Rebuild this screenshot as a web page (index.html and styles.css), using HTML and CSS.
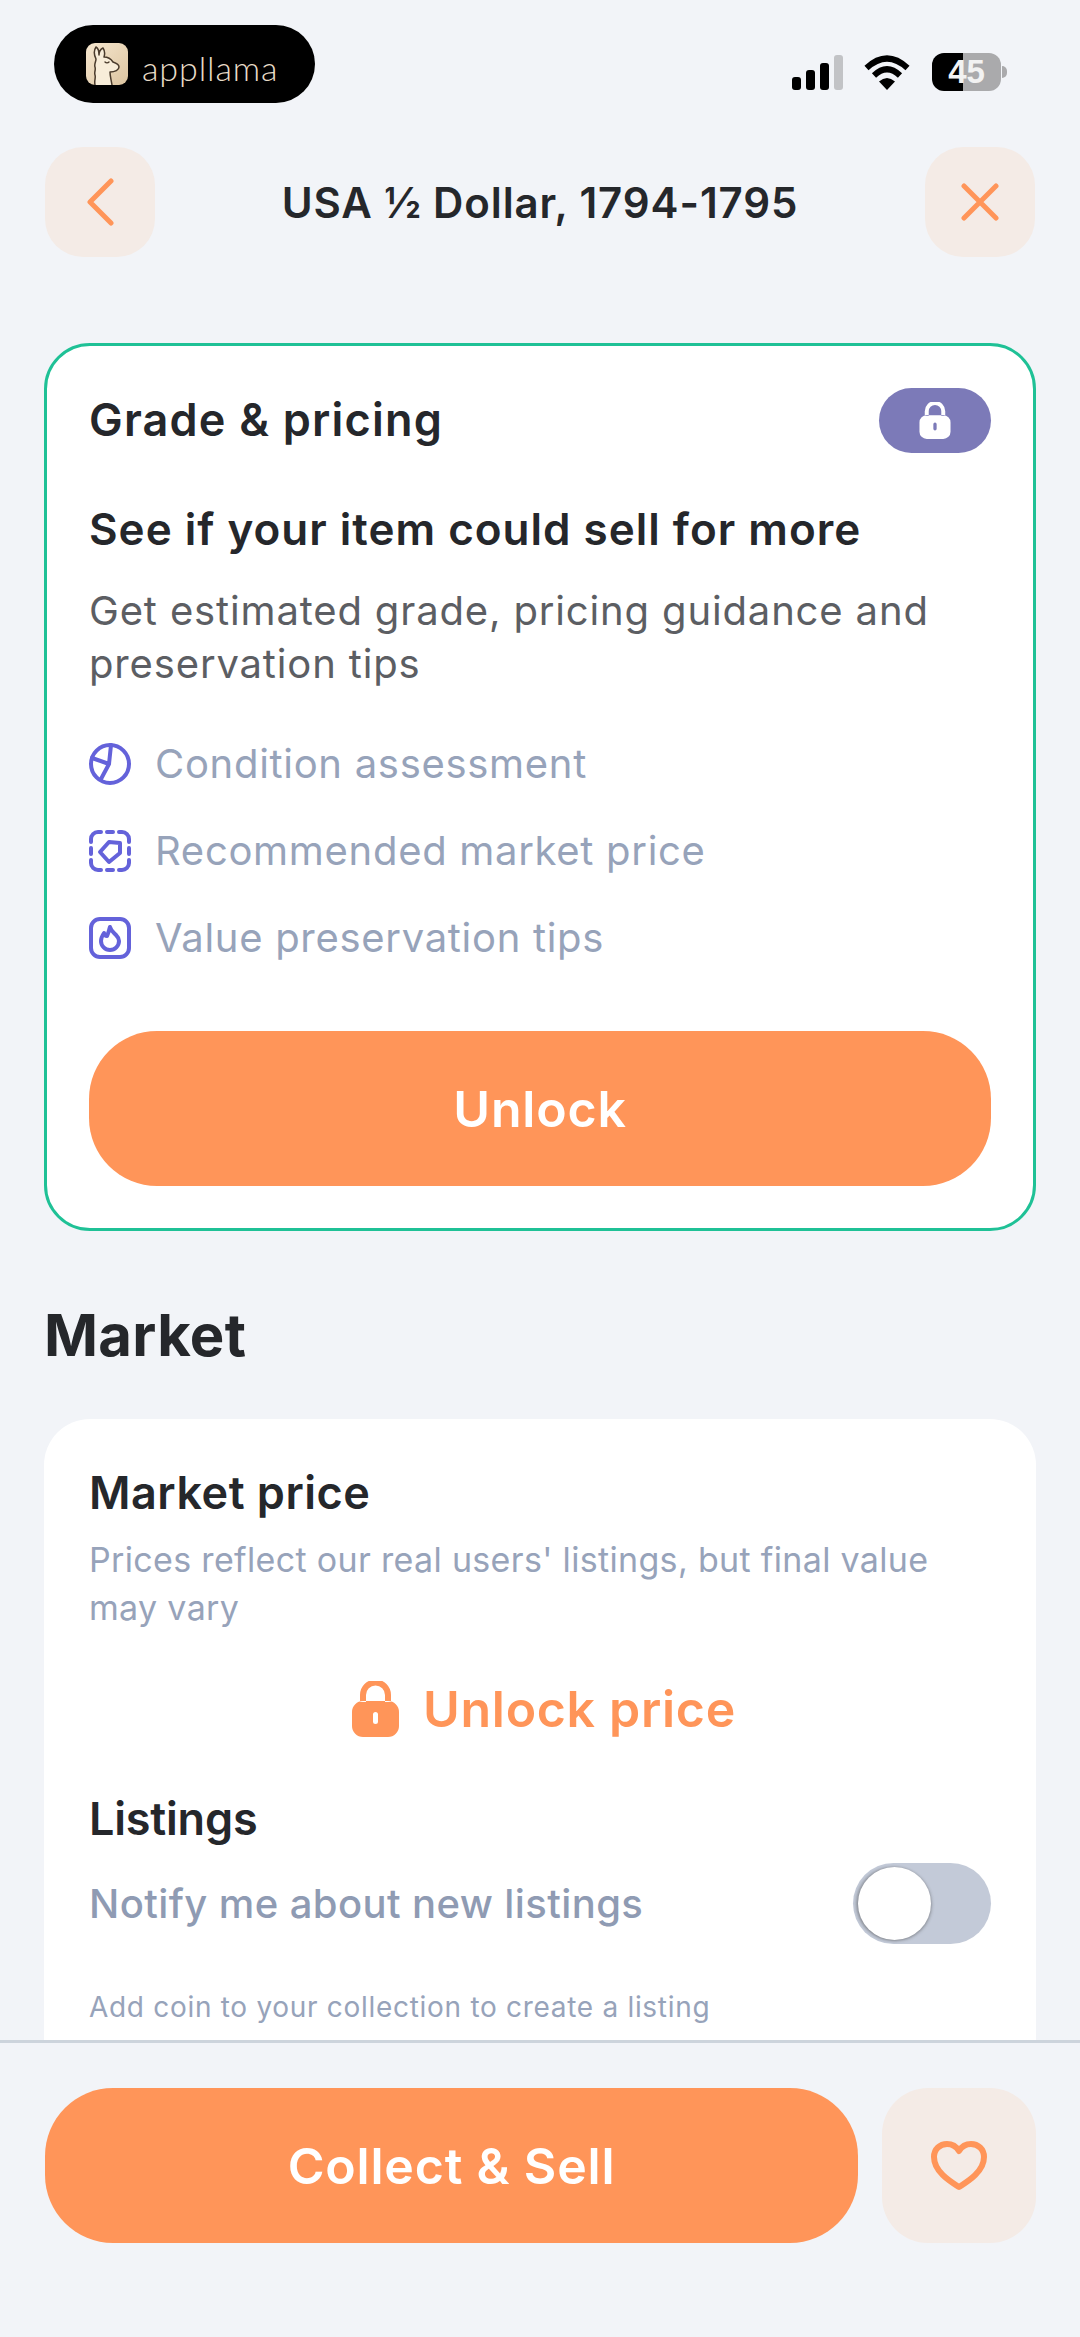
FILE: index.html
```html
<!DOCTYPE html>
<html lang="en">
<head>
<meta charset="UTF-8" />
<meta name="viewport" content="width=device-width, initial-scale=1" />
<title>USA ½ Dollar, 1794-1795</title>
<link rel="stylesheet" href="styles.css">
</head>
<body>
<div class="screen">

  <div class="status">
    <div class="app-pill">
      <svg class="app-logo" viewBox="0 0 42 42">
        <defs>
          <linearGradient id="logo-bg" x1="0" y1="0" x2="1" y2="1">
            <stop offset="0" stop-color="#f6e7cf"/>
            <stop offset="1" stop-color="#dcc4a0"/>
          </linearGradient>
        </defs>
        <rect width="42" height="42" rx="9" fill="url(#logo-bg)"/>
        <path d="M9 42c-1-5 1-7 0-10s1-5 0-8 1-5 1-8c-2-4-2-9 0-12 2 1 3 5 3 8 0-3 2-6 4-7 2 3 2 6 1 9 4 0 7 2 9 5 3 1 6 2 6 5s-4 5-9 5c0 4 1 7 2 13" fill="#f8edd9" stroke="#4a3b2c" stroke-width="1.5" stroke-linecap="round" stroke-linejoin="round"/>
        <path d="M19 19c1 1 3 1 4 0" fill="none" stroke="#4a3b2c" stroke-width="1.4" stroke-linecap="round"/>
      </svg>
      <span class="app-name">appllama</span>
    </div>
    <div class="indicators">
      <div class="signal">
        <span class="bar bar-1"></span>
        <span class="bar bar-2"></span>
        <span class="bar bar-3"></span>
        <span class="bar bar-4"></span>
      </div>
      <svg class="wifi" viewBox="0 0 46 35">
        <path d="M2.500 13Q23-6 43.500 13" fill="none" stroke="#000" stroke-width="6"/>
        <path d="M10 20.500Q23 8 36 20.500" fill="none" stroke="#000" stroke-width="6"/>
        <path d="M15 26.500Q23 19.500 31 26.500L23 35z" fill="#000"/>
      </svg>
      <div class="battery">45</div>
      <span class="battery-nub"></span>
    </div>
  </div>

  <header class="nav">
    <button class="icon-btn">
      <svg class="nav-icon" viewBox="0 0 30 48"><path d="M26 3 5 24l21 21"/></svg>
    </button>
    <h1 class="nav-title">USA ½ Dollar, 1794-1795</h1>
    <button class="icon-btn">
      <svg class="nav-icon close-icon" viewBox="0 0 38 38"><path d="M3 3l32 32M35 3 3 35"/></svg>
    </button>
  </header>

  <main class="content">
    <section class="card card-promo">
      <div class="card-head">
        <h2 class="card-title promo-head">Grade &amp; pricing</h2>
        <span class="lock-pill">
          <svg class="lock-small" viewBox="0 0 47 56"><path fill-rule="evenodd" d="M8 21v-7a15.500 15.500 0 0 1 31 0v7h-6v-7a9.500 9.500 0 0 0-19 0v7zM11 20h25a11 11 0 0 1 11 11v14a11 11 0 0 1-11 11H11A11 11 0 0 1 0 45V31a11 11 0 0 1 11-11zM23.500 31a2.500 2.500 0 0 0-2.500 2.500v7a2.500 2.500 0 0 0 5 0v-7a2.500 2.500 0 0 0-2.500-2.500z"/></svg>
        </span>
      </div>
      <h3 class="promo-title">See if your item could sell for more</h3>
      <p class="promo-text">Get estimated grade, pricing guidance and preservation tips</p>
      <ul class="features">
        <li class="feature">
          <svg class="feature-icon" viewBox="0 0 42 42">
            <circle cx="21" cy="21" r="19"/>
            <path d="M22 2l-2 19-8 15M20 21 3 15"/>
          </svg>
          Condition assessment
        </li>
        <li class="feature">
          <svg class="feature-icon" viewBox="0 0 42 42">
            <path d="M2 12V9a7 7 0 0 1 7-7h3M18 2h6M30 2h3a7 7 0 0 1 7 7v3M40 18v6M40 30v3a7 7 0 0 1-7 7h-3M24 40h-6M12 40H9a7 7 0 0 1-7-7v-3M2 24v-6"/>
            <path d="M11 22l9-10 11 1v10l-11 9z"/>
          </svg>
          Recommended market price
        </li>
        <li class="feature">
          <svg class="feature-icon" viewBox="0 0 42 42">
            <rect x="2" y="2" width="38" height="38" rx="9"/>
            <path d="M21 10c1 4 3 5 6 8 2 2 3 4 3 6a9 9 0 0 1-18 0c0-3 1-5 3-8 .5 2 1.500 3 3 3 1.500-3 2-6 3-9z"/>
          </svg>
          Value preservation tips
        </li>
      </ul>
      <button class="btn-primary btn-unlock">Unlock</button>
    </section>

    <h2 class="section-title">Market</h2>

    <section class="card card-market">
      <h3 class="card-title">Market price</h3>
      <p class="note">Prices reflect our real users' listings, but final value may vary</p>
      <div class="unlock-price">
        <svg class="lock-big" viewBox="0 0 47 56"><path fill-rule="evenodd" d="M8 21v-7a15.500 15.500 0 0 1 31 0v7h-6v-7a9.500 9.500 0 0 0-19 0v7zM11 20h25a11 11 0 0 1 11 11v14a11 11 0 0 1-11 11H11A11 11 0 0 1 0 45V31a11 11 0 0 1 11-11zM23.500 31a2.500 2.500 0 0 0-2.500 2.500v7a2.500 2.500 0 0 0 5 0v-7a2.500 2.500 0 0 0-2.500-2.500z"/></svg>
        <span>Unlock price</span>
      </div>
      <h3 class="card-title listings-title">Listings</h3>
      <div class="notify-row">
        <span class="notify-label">Notify me about new listings</span>
        <span class="toggle"><span class="toggle-knob"></span></span>
      </div>
      <p class="hint">Add coin to your collection to create a listing</p>
    </section>
  </main>

  <footer class="bottom-bar">
    <button class="btn-primary btn-collect">Collect &amp; Sell</button>
    <button class="fav-btn">
      <svg class="heart" viewBox="0 0 56 50"><path d="M28 46C20 41 3 31 3 16 3 8 9 3 16 3c5 0 9 2 12 7 3-5 7-7 12-7 7 0 13 5 13 13 0 15-17 25-25 30z"/></svg>
    </button>
  </footer>

</div>
</body>
</html>
```

FILE: styles.css
```css
* {
  box-sizing: border-box;
}
body {
  margin: 0;
  font-family: Inter, "Noto Sans", sans-serif;
  background: #f2f4f8;
  color: #25272b;
}
h1, h2, h3, p, ul {
  margin: 0;
  padding: 0;
}
button {
  border: none;
  padding: 0;
  font-family: inherit;
}
.screen {
  width: 1080px;
  height: 2337px;
  display: flex;
  flex-direction: column;
  overflow: hidden;
  background: #f2f4f8;
}

/* status bar */
.status {
  height: 147px;
  flex: none;
  display: flex;
  justify-content: space-between;
  align-items: flex-start;
  padding: 25px 73px 0 54px;
}
.app-pill {
  width: 261px;
  height: 78px;
  background: #000;
  border-radius: 39px;
  display: flex;
  align-items: center;
  padding-left: 32px;
  gap: 14px;
}
.app-logo {
  width: 42px;
  height: 42px;
}
.app-name {
  font-family: Lato, sans-serif;
  font-weight: 300;
  font-size: 34px;
  letter-spacing: 0.9px;
  color: #e8dcc8;
  margin-top: 6px;
}
.indicators {
  display: flex;
  align-items: center;
  margin-top: 28px;
}
.signal {
  display: flex;
  align-items: flex-end;
  gap: 5px;
  height: 35px;
}
.bar {
  width: 9px;
  border-radius: 3px;
  background: #000;
}
.bar-1 { height: 13px; }
.bar-2 { height: 20px; }
.bar-3 { height: 27px; }
.bar-4 { height: 35px; background: #c2c3c6; }
.wifi {
  width: 46px;
  height: 35px;
  margin-left: 21px;
}
.battery {
  width: 69px;
  height: 38px;
  margin-left: 22px;
  border-radius: 12px;
  background: linear-gradient(90deg, #000 45%, #aaaaac 45%);
  color: #f2f2f2;
  font-family: "Liberation Sans", sans-serif;
  font-weight: 700;
  font-size: 33px;
  line-height: 38px;
  text-align: center;
}
.battery-nub {
  width: 5px;
  height: 12px;
  margin-left: 1px;
  border-radius: 0 5px 5px 0;
  background: #aaaaac;
}

/* top nav */
.nav {
  height: 110px;
  flex: none;
  display: flex;
  justify-content: space-between;
  align-items: center;
  padding: 0 45px;
}
.icon-btn {
  width: 110px;
  height: 110px;
  border-radius: 38px;
  background: #f4ebe6;
  display: flex;
  align-items: center;
  justify-content: center;
}
.nav-icon {
  width: 30px;
  height: 48px;
  fill: none;
  stroke: #ff9559;
  stroke-width: 5;
  stroke-linecap: round;
  stroke-linejoin: round;
}
.close-icon {
  width: 38px;
  height: 38px;
}
.nav-title {
  font-size: 42px;
  font-weight: 600;
  letter-spacing: 0.9px;
  color: #25272b;
}

/* scrolling part */
.content {
  flex: 1;
  min-height: 0;
  overflow: hidden;
  padding: 86px 44px 0;
}
.card {
  background: #fff;
  border-radius: 46px;
}
.card-promo {
  border: 3px solid #1fc196;
  padding: 42px;
}
.card-head {
  display: flex;
  justify-content: space-between;
  align-items: center;
  height: 65px;
}
.card-title {
  font-size: 45px;
  line-height: 60px;
  font-weight: 600;
  letter-spacing: 0.5px;
  color: #25272b;
}
.promo-head {
  letter-spacing: 1.2px;
  margin-top: -2px;
}
.lock-pill {
  width: 112px;
  height: 65px;
  border-radius: 33px;
  background: #7c7ab8;
  display: flex;
  align-items: center;
  justify-content: center;
}
.lock-small {
  width: 32px;
  height: 37px;
  fill: #fff;
}
.promo-title {
  margin-top: 46px;
  font-size: 44px;
  line-height: 60px;
  font-weight: 600;
  letter-spacing: 1px;
  color: #25272b;
}
.promo-text {
  margin-top: 25px;
  font-size: 40px;
  line-height: 53px;
  letter-spacing: 0.85px;
  color: #5c5e63;
}
.features {
  list-style: none;
  margin-top: 30px;
}
.feature {
  height: 87px;
  display: flex;
  align-items: center;
  gap: 24px;
  font-size: 40px;
  letter-spacing: 0.7px;
  color: #97a3ba;
}
.feature-icon {
  width: 42px;
  height: 42px;
  flex: none;
  fill: none;
  stroke: #6462da;
  stroke-width: 4;
  stroke-linecap: round;
  stroke-linejoin: round;
}
.btn-primary {
  background: #ff9559;
  color: #fff;
  font-weight: 600;
  height: 155px;
  border-radius: 68px;
  font-size: 50px;
  letter-spacing: 0.8px;
}
.btn-unlock {
  display: block;
  width: 100%;
  margin-top: 50px;
}
.section-title {
  margin-top: 69px;
  font-size: 58px;
  line-height: 70px;
  font-weight: 700;
  letter-spacing: 0.3px;
  color: #25272b;
}
.card-market {
  margin-top: 49px;
  padding: 44px 45px 60px;
}
.note {
  margin-top: 13px;
  padding-right: 30px;
  font-size: 34px;
  line-height: 48px;
  letter-spacing: 0.33px;
  color: #97a3ba;
}
.unlock-price {
  margin-top: 42px;
  height: 70px;
  padding-left: 8px;
  display: flex;
  align-items: center;
  justify-content: center;
  gap: 24px;
  font-size: 50px;
  font-weight: 600;
  letter-spacing: 0.7px;
  color: #ff9559;
}
.lock-big {
  width: 47px;
  height: 56px;
  fill: #ff9559;
}
.listings-title {
  margin-top: 45px;
  letter-spacing: -0.2px;
}
.notify-row {
  margin-top: 14px;
  height: 81px;
  display: flex;
  justify-content: space-between;
  align-items: center;
}
.notify-label {
  font-size: 40px;
  font-weight: 450;
  letter-spacing: 0.4px;
  color: #8f9bb3;
}
.toggle {
  width: 138px;
  height: 81px;
  border-radius: 41px;
  background: #c3cad8;
  padding: 4px 5px;
}
.toggle-knob {
  display: block;
  width: 73px;
  height: 73px;
  border-radius: 50%;
  background: #fff;
  box-shadow: -2px 0 3px rgba(60, 60, 60, 0.35), 1px 1px 3px rgba(60, 60, 60, 0.35);
}
.hint {
  margin-top: 43px;
  font-size: 28px;
  line-height: 40px;
  letter-spacing: 0.7px;
  color: #97a3ba;
}

/* bottom actions */
.bottom-bar {
  flex: none;
  height: 297px;
  border-top: 3px solid #cdd4dc;
  padding: 45px 44px 0 45px;
  display: flex;
  align-items: flex-start;
  gap: 24px;
  background: #f2f4f8;
}
.btn-collect {
  width: 813px;
  flex: none;
}
.fav-btn {
  width: 154px;
  height: 155px;
  flex: none;
  border-radius: 46px;
  background: #f4ebe6;
  display: flex;
  align-items: center;
  justify-content: center;
}
.heart {
  width: 56px;
  height: 50px;
  fill: none;
  stroke: #ff9559;
  stroke-width: 6;
  stroke-linejoin: round;
}
```
